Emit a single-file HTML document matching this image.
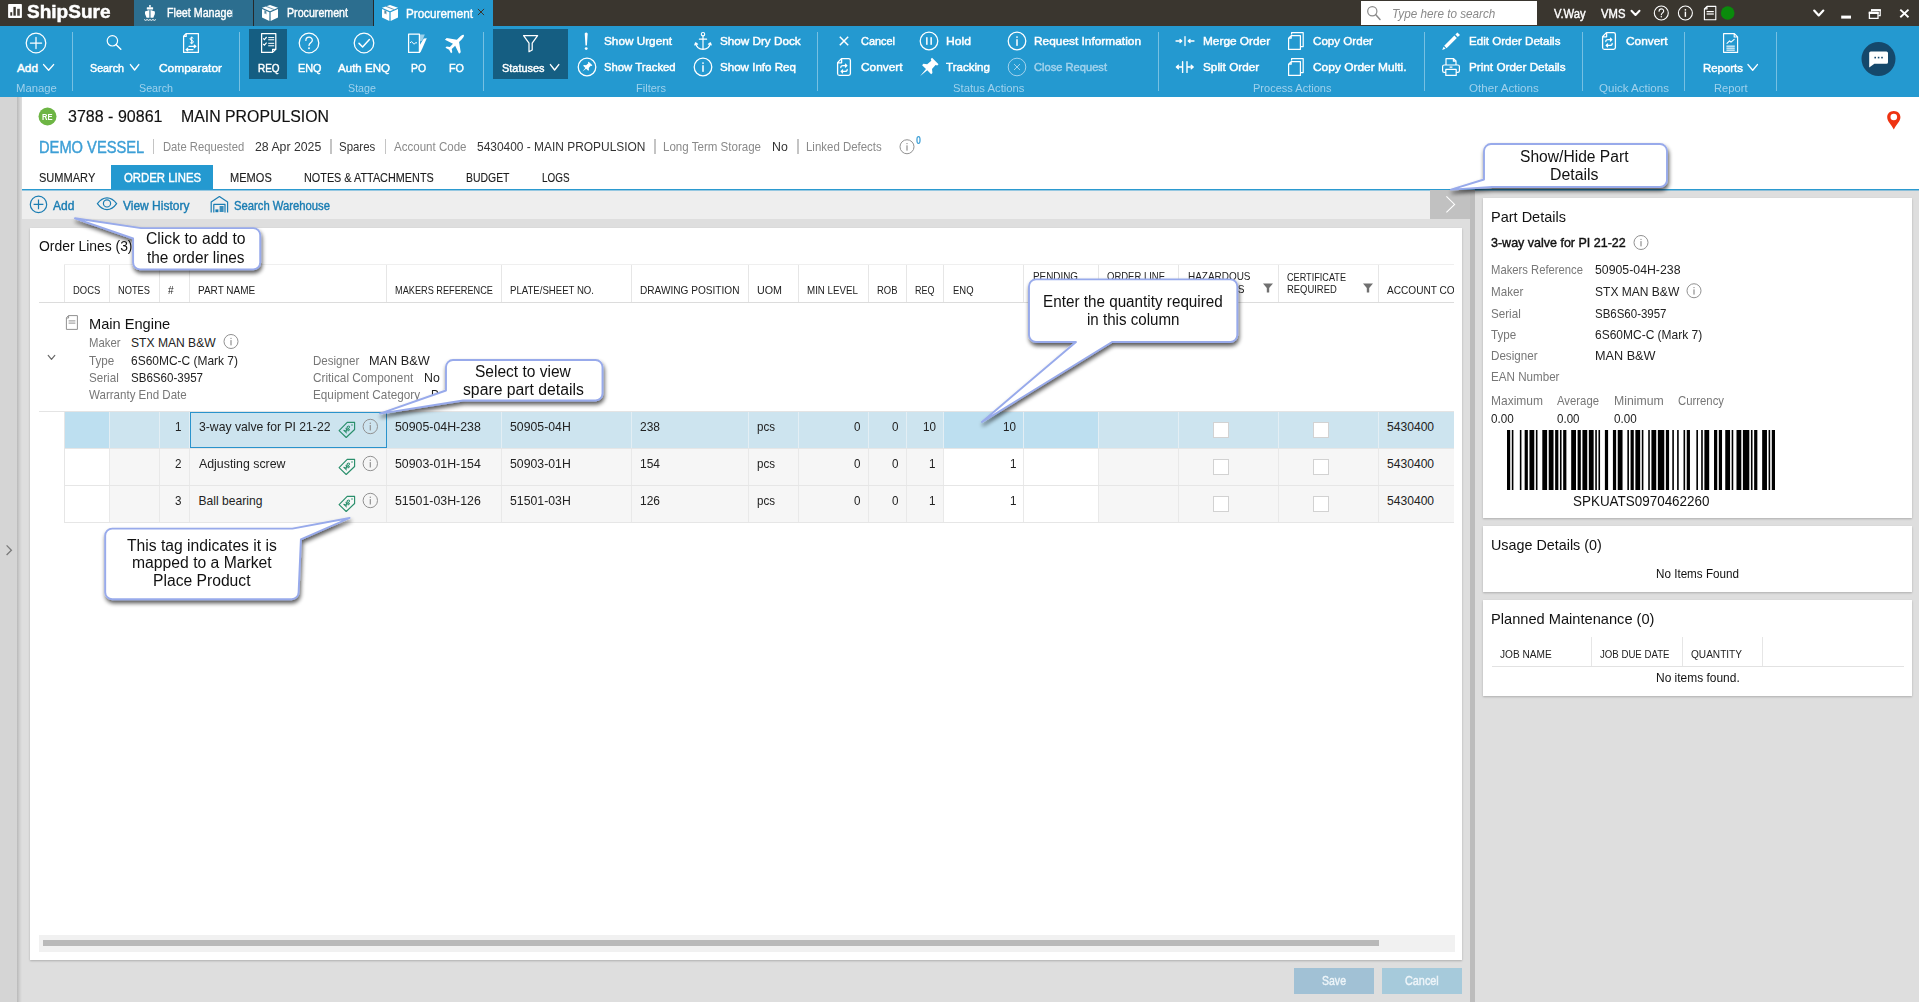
<!DOCTYPE html>
<html><head><meta charset="utf-8"><title>ShipSure - Procurement</title><style>
html,body{margin:0;padding:0}
body{width:1919px;height:1002px;overflow:hidden;position:relative;background:#dedede;font-family:"Liberation Sans", sans-serif;}
body div,body svg,body span.t{position:absolute;}
span.t{white-space:pre;line-height:1;display:block}
svg{overflow:visible}

</style></head><body>
<div style="left:0px;top:0px;width:1919px;height:26px;background:#3a362f;"></div>
<div style="left:134px;top:0px;width:119px;height:26px;background:#2c6e8f;"></div>
<div style="left:253px;top:0px;width:1px;height:26px;background:#26292b;"></div>
<div style="left:254px;top:0px;width:119px;height:26px;background:#2c6e8f;"></div>
<div style="left:373px;top:0px;width:1px;height:26px;background:#26292b;"></div>
<div style="left:374px;top:0px;width:119px;height:26px;background:#2499d0;"></div>
<div style="left:1361px;top:1px;width:176px;height:24px;background:#ffffff;"></div>
<div style="left:0px;top:26px;width:1919px;height:71px;background:#2499d0;box-shadow:0 1px 1px rgba(120,140,150,.55);"></div>
<div style="left:249px;top:29px;width:38px;height:50px;background:#155e82;"></div>
<div style="left:493px;top:29px;width:75px;height:50px;background:#155e82;"></div>
<div style="left:72px;top:32px;width:1px;height:59px;background:rgba(255,255,255,.38);"></div>
<div style="left:239px;top:32px;width:1px;height:59px;background:rgba(255,255,255,.38);"></div>
<div style="left:483px;top:32px;width:1px;height:59px;background:rgba(255,255,255,.38);"></div>
<div style="left:817px;top:32px;width:1px;height:59px;background:rgba(255,255,255,.38);"></div>
<div style="left:1158px;top:32px;width:1px;height:59px;background:rgba(255,255,255,.38);"></div>
<div style="left:1424px;top:32px;width:1px;height:59px;background:rgba(255,255,255,.38);"></div>
<div style="left:1582px;top:32px;width:1px;height:59px;background:rgba(255,255,255,.38);"></div>
<div style="left:1684px;top:32px;width:1px;height:59px;background:rgba(255,255,255,.38);"></div>
<div style="left:1776px;top:32px;width:1px;height:59px;background:rgba(255,255,255,.38);"></div>
<div style="left:0px;top:97px;width:17px;height:905px;background:#d5d5d5;"></div>
<div style="left:17px;top:97px;width:5px;height:905px;background:linear-gradient(90deg,#b9b9b9,#cfcfcf 50%,#dedede);"></div>
<div style="left:22px;top:97px;width:1897px;height:92px;background:#ffffff;"></div>
<div style="left:22px;top:189px;width:1897px;height:1px;background:#2b9ad0;"></div>
<div style="left:22px;top:190px;width:1897px;height:1px;background:rgba(43,154,208,.45);"></div>
<div style="left:22px;top:190px;width:1408px;height:29px;background:#eeeeee;"></div>
<div style="left:22px;top:190px;width:1408px;height:1px;background:rgba(43,154,208,.45);"></div>
<div style="left:1430px;top:190px;width:45px;height:29px;background:#c1c1c1;"></div>
<div style="left:1470px;top:190px;width:5px;height:812px;background:#bcbcbc;"></div>
<div style="left:30px;top:228px;width:1432px;height:732px;background:#ffffff;box-shadow:0 1px 2px rgba(0,0,0,.22);"></div>
<div style="left:1483px;top:198px;width:429px;height:320px;background:#ffffff;box-shadow:0 1px 2px rgba(0,0,0,.22);"></div>
<div style="left:1483px;top:526px;width:429px;height:66px;background:#ffffff;box-shadow:0 1px 2px rgba(0,0,0,.22);"></div>
<div style="left:1483px;top:600px;width:429px;height:96px;background:#ffffff;box-shadow:0 1px 2px rgba(0,0,0,.22);"></div>
<div style="left:1294px;top:968px;width:80px;height:26px;background:#a1c1d5;"></div>
<div style="left:1382px;top:968px;width:80px;height:26px;background:#a6cadb;"></div>
<div style="left:39px;top:935px;width:1416px;height:17px;background:#f1f1f1;"></div>
<div style="left:43px;top:940px;width:1336px;height:6px;background:#b9b9b9;"></div>
<div style="left:152.5px;top:139px;width:1.5px;height:15px;background:#c4c4c4;"></div>
<div style="left:330px;top:139px;width:1.5px;height:15px;background:#c4c4c4;"></div>
<div style="left:384.5px;top:139px;width:1.5px;height:15px;background:#c4c4c4;"></div>
<div style="left:654px;top:139px;width:1.5px;height:15px;background:#c4c4c4;"></div>
<div style="left:797px;top:139px;width:1.5px;height:15px;background:#c4c4c4;"></div>
<div style="left:111px;top:165px;width:102px;height:24px;background:#2499d0;"></div>
<div style="left:39px;top:264px;width:1415px;height:39px;overflow:hidden" id="thead"><div style="left:25px;top:0;width:1px;height:38px;background:#e6e6e6"></div><div style="left:70px;top:0;width:1px;height:38px;background:#e6e6e6"></div><div style="left:120px;top:0;width:1px;height:38px;background:#e6e6e6"></div><div style="left:150px;top:0;width:1px;height:38px;background:#e6e6e6"></div><div style="left:347px;top:0;width:1px;height:38px;background:#e6e6e6"></div><div style="left:462px;top:0;width:1px;height:38px;background:#e6e6e6"></div><div style="left:592px;top:0;width:1px;height:38px;background:#e6e6e6"></div><div style="left:709px;top:0;width:1px;height:38px;background:#e6e6e6"></div><div style="left:759px;top:0;width:1px;height:38px;background:#e6e6e6"></div><div style="left:829px;top:0;width:1px;height:38px;background:#e6e6e6"></div><div style="left:867px;top:0;width:1px;height:38px;background:#e6e6e6"></div><div style="left:904px;top:0;width:1px;height:38px;background:#e6e6e6"></div><div style="left:984px;top:0;width:1px;height:38px;background:#e6e6e6"></div><div style="left:1059px;top:0;width:1px;height:38px;background:#e6e6e6"></div><div style="left:1139px;top:0;width:1px;height:38px;background:#e6e6e6"></div><div style="left:1239px;top:0;width:1px;height:38px;background:#e6e6e6"></div><div style="left:1339px;top:0;width:1px;height:38px;background:#e6e6e6"></div><div style="left:25px;top:0;width:1390px;height:1px;background:#efefef"></div><div style="left:0;top:38px;width:1415px;height:1px;background:#dcdcdc"></div></div>
<div style="left:39px;top:411px;width:1415px;height:1px;background:#e4e4e4;"></div>
<div style="left:64px;top:412px;width:1390px;height:37px;border-bottom:1px solid #e6e6e6;box-sizing:border-box;overflow:hidden"><div style="left:0px;top:0;width:45px;height:36px;background:#bddff0;border-left:1px solid #e3eef4;box-sizing:border-box"></div><div style="left:45px;top:0;width:50px;height:36px;background:#cde4ef;border-left:1px solid #e3eef4;box-sizing:border-box"></div><div style="left:95px;top:0;width:30px;height:36px;background:#cde4ef;border-left:1px solid #e3eef4;box-sizing:border-box"></div><div style="left:125px;top:0;width:197px;height:36px;background:#cde4ef;border-left:1px solid #e3eef4;box-sizing:border-box"></div><div style="left:322px;top:0;width:115px;height:36px;background:#cde4ef;border-left:1px solid #e3eef4;box-sizing:border-box"></div><div style="left:437px;top:0;width:130px;height:36px;background:#cde4ef;border-left:1px solid #e3eef4;box-sizing:border-box"></div><div style="left:567px;top:0;width:117px;height:36px;background:#cde4ef;border-left:1px solid #e3eef4;box-sizing:border-box"></div><div style="left:684px;top:0;width:50px;height:36px;background:#cde4ef;border-left:1px solid #e3eef4;box-sizing:border-box"></div><div style="left:734px;top:0;width:70px;height:36px;background:#cde4ef;border-left:1px solid #e3eef4;box-sizing:border-box"></div><div style="left:804px;top:0;width:38px;height:36px;background:#cde4ef;border-left:1px solid #e3eef4;box-sizing:border-box"></div><div style="left:842px;top:0;width:37px;height:36px;background:#cde4ef;border-left:1px solid #e3eef4;box-sizing:border-box"></div><div style="left:879px;top:0;width:80px;height:36px;background:#bddff0;border-left:1px solid #e3eef4;box-sizing:border-box"></div><div style="left:959px;top:0;width:75px;height:36px;background:#bddff0;border-left:1px solid #e3eef4;box-sizing:border-box"></div><div style="left:1034px;top:0;width:80px;height:36px;background:#cde4ef;border-left:1px solid #e3eef4;box-sizing:border-box"></div><div style="left:1114px;top:0;width:100px;height:36px;background:#cde4ef;border-left:1px solid #e3eef4;box-sizing:border-box"></div><div style="left:1214px;top:0;width:100px;height:36px;background:#cde4ef;border-left:1px solid #e3eef4;box-sizing:border-box"></div><div style="left:1314px;top:0;width:76px;height:36px;background:#cde4ef;border-left:1px solid #e3eef4;box-sizing:border-box"></div></div>
<div style="left:1213px;top:422px;width:16px;height:16px;background:#fff;border:1px solid #d2d2d2;box-sizing:border-box"></div>
<div style="left:1313px;top:422px;width:16px;height:16px;background:#fff;border:1px solid #d2d2d2;box-sizing:border-box"></div>
<div style="left:64px;top:449px;width:1390px;height:37px;border-bottom:1px solid #e6e6e6;box-sizing:border-box;overflow:hidden"><div style="left:0px;top:0;width:45px;height:36px;background:#ffffff;border-left:1px solid #e9e9e9;box-sizing:border-box"></div><div style="left:45px;top:0;width:50px;height:36px;background:#f6f6f6;border-left:1px solid #e9e9e9;box-sizing:border-box"></div><div style="left:95px;top:0;width:30px;height:36px;background:#f6f6f6;border-left:1px solid #e9e9e9;box-sizing:border-box"></div><div style="left:125px;top:0;width:197px;height:36px;background:#f6f6f6;border-left:1px solid #e9e9e9;box-sizing:border-box"></div><div style="left:322px;top:0;width:115px;height:36px;background:#f6f6f6;border-left:1px solid #e9e9e9;box-sizing:border-box"></div><div style="left:437px;top:0;width:130px;height:36px;background:#f6f6f6;border-left:1px solid #e9e9e9;box-sizing:border-box"></div><div style="left:567px;top:0;width:117px;height:36px;background:#f6f6f6;border-left:1px solid #e9e9e9;box-sizing:border-box"></div><div style="left:684px;top:0;width:50px;height:36px;background:#f6f6f6;border-left:1px solid #e9e9e9;box-sizing:border-box"></div><div style="left:734px;top:0;width:70px;height:36px;background:#f6f6f6;border-left:1px solid #e9e9e9;box-sizing:border-box"></div><div style="left:804px;top:0;width:38px;height:36px;background:#f6f6f6;border-left:1px solid #e9e9e9;box-sizing:border-box"></div><div style="left:842px;top:0;width:37px;height:36px;background:#f6f6f6;border-left:1px solid #e9e9e9;box-sizing:border-box"></div><div style="left:879px;top:0;width:80px;height:36px;background:#ffffff;border-left:1px solid #e9e9e9;box-sizing:border-box"></div><div style="left:959px;top:0;width:75px;height:36px;background:#ffffff;border-left:1px solid #e9e9e9;box-sizing:border-box"></div><div style="left:1034px;top:0;width:80px;height:36px;background:#f6f6f6;border-left:1px solid #e9e9e9;box-sizing:border-box"></div><div style="left:1114px;top:0;width:100px;height:36px;background:#f6f6f6;border-left:1px solid #e9e9e9;box-sizing:border-box"></div><div style="left:1214px;top:0;width:100px;height:36px;background:#f6f6f6;border-left:1px solid #e9e9e9;box-sizing:border-box"></div><div style="left:1314px;top:0;width:76px;height:36px;background:#f6f6f6;border-left:1px solid #e9e9e9;box-sizing:border-box"></div></div>
<div style="left:1213px;top:459px;width:16px;height:16px;background:#fff;border:1px solid #d2d2d2;box-sizing:border-box"></div>
<div style="left:1313px;top:459px;width:16px;height:16px;background:#fff;border:1px solid #d2d2d2;box-sizing:border-box"></div>
<div style="left:64px;top:486px;width:1390px;height:37px;border-bottom:1px solid #e6e6e6;box-sizing:border-box;overflow:hidden"><div style="left:0px;top:0;width:45px;height:36px;background:#ffffff;border-left:1px solid #e9e9e9;box-sizing:border-box"></div><div style="left:45px;top:0;width:50px;height:36px;background:#f6f6f6;border-left:1px solid #e9e9e9;box-sizing:border-box"></div><div style="left:95px;top:0;width:30px;height:36px;background:#f6f6f6;border-left:1px solid #e9e9e9;box-sizing:border-box"></div><div style="left:125px;top:0;width:197px;height:36px;background:#f6f6f6;border-left:1px solid #e9e9e9;box-sizing:border-box"></div><div style="left:322px;top:0;width:115px;height:36px;background:#f6f6f6;border-left:1px solid #e9e9e9;box-sizing:border-box"></div><div style="left:437px;top:0;width:130px;height:36px;background:#f6f6f6;border-left:1px solid #e9e9e9;box-sizing:border-box"></div><div style="left:567px;top:0;width:117px;height:36px;background:#f6f6f6;border-left:1px solid #e9e9e9;box-sizing:border-box"></div><div style="left:684px;top:0;width:50px;height:36px;background:#f6f6f6;border-left:1px solid #e9e9e9;box-sizing:border-box"></div><div style="left:734px;top:0;width:70px;height:36px;background:#f6f6f6;border-left:1px solid #e9e9e9;box-sizing:border-box"></div><div style="left:804px;top:0;width:38px;height:36px;background:#f6f6f6;border-left:1px solid #e9e9e9;box-sizing:border-box"></div><div style="left:842px;top:0;width:37px;height:36px;background:#f6f6f6;border-left:1px solid #e9e9e9;box-sizing:border-box"></div><div style="left:879px;top:0;width:80px;height:36px;background:#ffffff;border-left:1px solid #e9e9e9;box-sizing:border-box"></div><div style="left:959px;top:0;width:75px;height:36px;background:#ffffff;border-left:1px solid #e9e9e9;box-sizing:border-box"></div><div style="left:1034px;top:0;width:80px;height:36px;background:#f6f6f6;border-left:1px solid #e9e9e9;box-sizing:border-box"></div><div style="left:1114px;top:0;width:100px;height:36px;background:#f6f6f6;border-left:1px solid #e9e9e9;box-sizing:border-box"></div><div style="left:1214px;top:0;width:100px;height:36px;background:#f6f6f6;border-left:1px solid #e9e9e9;box-sizing:border-box"></div><div style="left:1314px;top:0;width:76px;height:36px;background:#f6f6f6;border-left:1px solid #e9e9e9;box-sizing:border-box"></div></div>
<div style="left:1213px;top:496px;width:16px;height:16px;background:#fff;border:1px solid #d2d2d2;box-sizing:border-box"></div>
<div style="left:1313px;top:496px;width:16px;height:16px;background:#fff;border:1px solid #d2d2d2;box-sizing:border-box"></div>
<div style="left:64px;top:412px;width:1px;height:111px;background:#e6e6e6;"></div>
<div style="left:190px;top:412px;width:197px;height:36px;border:1px solid #2a93cc;box-sizing:border-box"></div>
<div style="left:1591px;top:637px;width:1px;height:30px;background:#e6e6e6;"></div>
<div style="left:1682px;top:637px;width:1px;height:30px;background:#e6e6e6;"></div>
<div style="left:1762px;top:637px;width:1px;height:30px;background:#e6e6e6;"></div>
<div style="left:1492px;top:666px;width:412px;height:1px;background:#e2e2e2;"></div>
<svg style="left:0;top:0" width="1919" height="1002" viewBox="0 0 1919 1002"><rect x="8.1" y="4" width="13.8" height="14.1" rx=".8" fill="#fff"/><rect x="10.3" y="12.2" width="1.9" height="3.5" fill="#3a362f"/><rect x="13.4" y="6.9" width="2.4" height="8.8" fill="#3a362f"/><rect x="17.2" y="8.8" width="2.6" height="6.9" fill="#4e4a43"/><g fill="#fff"><rect x="149.2" y="5" width="1.5" height="2.3"/><rect x="146.8" y="7.2" width="6.3" height="2.4" rx=".5"/><path d="M149.4,10 L149.4,17.8 L146.6,17.8 Q144.3,14 145,11.6 Z"/><path d="M150.5,10 L150.5,17.8 L153.3,17.8 Q155.6,14 154.9,11.6 Z"/></g><path d="M144.2,19.6 q1.45,1.5 2.9,0 q1.45,1.5 2.9,0 q1.45,1.5 2.9,0 q1.45,1.5 2.9,0" fill="none" stroke="#fff" stroke-width="1"/><g transform="translate(262,0)" fill="#fff"><path d="M8,5 L16,7.8 L8,11.2 L0,7.8 Z"/><path d="M0,9 L7.4,12.3 L7.4,21 L0,17.6 Z"/><path d="M8.6,12.3 L16,9 L16,17.6 L8.6,21 Z"/><path d="M3.2,6.6 L11.3,9.7 L12.6,9.2 L4.5,6.1 Z" fill="#2c6e8f" opacity=".7"/><path d="M2.4,10.2 L4.4,11.1 L4.4,14.6 L3.4,13.4 L2.4,13.8 Z" fill="#2c6e8f" opacity=".8"/></g><g transform="translate(382,0)" fill="#fff"><path d="M8,5 L16,7.8 L8,11.2 L0,7.8 Z"/><path d="M0,9 L7.4,12.3 L7.4,21 L0,17.6 Z"/><path d="M8.6,12.3 L16,9 L16,17.6 L8.6,21 Z"/><path d="M3.2,6.6 L11.3,9.7 L12.6,9.2 L4.5,6.1 Z" fill="#2c6e8f" opacity=".7"/><path d="M2.4,10.2 L4.4,11.1 L4.4,14.6 L3.4,13.4 L2.4,13.8 Z" fill="#2c6e8f" opacity=".8"/></g><path d="M477.9,8.9 L484.1,15.1 M484.1,8.9 L477.9,15.1" fill="none" stroke="#3a362f" stroke-width="1"/><circle cx="1372.3" cy="11.2" r="4.6" fill="none" stroke="#8a8a8a" stroke-width="1.2"/><path d="M1375.6,14.6 L1380,19.4" fill="none" stroke="#8a8a8a" stroke-width="1.5" stroke-linecap="round"/><path d="M1631.5,10.8 L1635.5,15 L1639.5,10.8" fill="none" stroke="#fff" stroke-width="2" stroke-linecap="round" stroke-linejoin="round"/><circle cx="1661.3" cy="13" r="7" fill="none" stroke="#fff" stroke-width="1.1"/><path d="M1659.06,11.18 C1659.06,8.100000000000001 1663.68,8.100000000000001 1663.68,11.040000000000001 C1663.68,12.86 1661.3,12.86 1661.3,14.82" fill="none" stroke="#fff" stroke-width="1.1" stroke-linecap="round"/><circle cx="1661.3" cy="16.78" r="0.76" fill="#fff"/><circle cx="1685.4" cy="13" r="7" fill="none" stroke="#fff" stroke-width="1.1"/><circle cx="1685.4" cy="9.85" r="0.84" fill="#fff"/><rect x="1684.7" y="11.6" width="1.4" height="5.25" fill="#fff"/><path d="M1707,6.4 L1715.8,6.4 L1715.8,19.8 L1704.4,19.8 L1704.4,9 Z M1704.4,9 L1707,9 L1707,6.4" fill="none" stroke="#fff" stroke-width="1.1" stroke-linejoin="round"/><rect x="1706.6" y="11" width="7.2" height="1.2" fill="#fff"/><rect x="1706.6" y="13.4" width="7.2" height="1.2" fill="#fff"/><circle cx="1727.7" cy="13" r="6.8" fill="#0a8a0c"/><path d="M1814.2,10.6 L1818.75,15.4 L1823.3,10.6" fill="none" stroke="#fff" stroke-width="2.2" stroke-linecap="round" stroke-linejoin="round"/><rect x="1841.2" y="15.6" width="9.8" height="3" fill="#fff"/><path d="M1869.4,12.4 L1878,12.4 L1878,18.4 L1869.4,18.4 Z" fill="none" stroke="#fff" stroke-width="1.3"/><rect x="1868.8" y="11.8" width="9.8" height="2.2" fill="#fff"/><path d="M1871.6,11.6 L1871.6,9.9 L1880.2,9.9 L1880.2,15.6 L1878.4,15.6" fill="none" stroke="#fff" stroke-width="1.2"/><rect x="1871" y="9.3" width="9.8" height="1.8" fill="#fff"/><path d="M1900.3,9.6 L1908.5,17.2 M1908.5,9.6 L1900.3,17.2" fill="none" stroke="#fff" stroke-width="1.9"/><circle cx="36" cy="43" r="9.8" fill="none" stroke="#fff" stroke-width="1.25" stroke-linecap="round" stroke-linejoin="round"/><path d="M30.4,43 L41.6,43 M36,37.4 L36,48.6" fill="none" stroke="#fff" stroke-width="1.25" stroke-linecap="round" stroke-linejoin="round"/><path d="M43.6,64.6 L48.6,70.2 L53.6,64.6" fill="none" stroke="#fff" stroke-width="1.4" stroke-linecap="round" stroke-linejoin="round"/><path d="M130.4,64.6 L134.60000000000002,70 L138.8,64.6" fill="none" stroke="#fff" stroke-width="1.4" stroke-linecap="round" stroke-linejoin="round"/><path d="M550.4,64.6 L554.5999999999999,70 L558.8,64.6" fill="none" stroke="#fff" stroke-width="1.4" stroke-linecap="round" stroke-linejoin="round"/><path d="M1748,64.6 L1752.7,70.2 L1757.4,64.6" fill="none" stroke="#fff" stroke-width="1.4" stroke-linecap="round" stroke-linejoin="round"/><circle cx="112.4" cy="40.8" r="5.2" fill="none" stroke="#fff" stroke-width="1.2"/><path d="M116.2,44.8 L120.8,49.2" fill="none" stroke="#fff" stroke-width="1.5" stroke-linecap="round"/><path d="M186,33.6 L198.4,33.6 L198.4,52.4 L183.6,52.4 L183.6,36.2 Z M183.6,36.4 L186.2,36.4 L186.2,33.8" fill="none" stroke="#fff" stroke-width="1.25" stroke-linecap="round" stroke-linejoin="round"/><path d="M193.3,38.3 C192.6,37.3 190,37.3 190,38.9 C190,40.6 193.4,40 193.4,41.9 C193.4,43.4 190.6,43.5 189.9,42.4 M191.7,36.6 L191.7,44.2" fill="none" stroke="#fff" stroke-width="1"/><path d="M189,46.4 L195.6,46.4 M194.2,45 L196,46.4 L194.2,47.8 M193,49.6 L186.4,49.6 M187.8,48.2 L186,49.6 L187.8,51" fill="none" stroke="#fff" stroke-width="1.1" stroke-linecap="round" stroke-linejoin="round"/><path d="M261.6,33.6 L275.8,33.6 L275.8,49.4 L272.6,52.4 L261.6,52.4 Z M275.6,49.4 L272.6,49.4 L272.6,52.2" fill="none" stroke="#fff" stroke-width="1.25" stroke-linecap="round" stroke-linejoin="round"/><path d="M263.2,38.4 L264.4,39.6 L266.6,37 M263.2,44 L264.4,45.2 L266.6,42.6" fill="none" stroke="#fff" stroke-width="1.2"/><g fill="#fff" opacity=".92"><rect x="268.2" y="37" width="6" height="1.1"/><rect x="268.2" y="39.2" width="6" height="1.1"/><rect x="268.2" y="42.8" width="6" height="1.1"/><rect x="268.2" y="45.2" width="6" height="1.1"/></g><circle cx="309" cy="43" r="9.8" fill="none" stroke="#fff" stroke-width="1.25"/><path d="M305.864,40.452 C305.864,36.14 312.332,36.14 312.332,40.256 C312.332,42.804 309,42.804 309,45.548" fill="none" stroke="#fff" stroke-width="1.25" stroke-linecap="round"/><circle cx="309" cy="48.292" r="0.931" fill="#fff"/><circle cx="364" cy="43" r="9.8" fill="none" stroke="#fff" stroke-width="1.25" stroke-linecap="round" stroke-linejoin="round"/><path d="M359,43.4 L362.6,47 L369.4,39.6" fill="none" stroke="#fff" stroke-width="1.5" stroke-linecap="round" stroke-linejoin="round"/><path d="M408.6,34 L419.4,34 L419.4,52.4 L408.6,52.4 Z" fill="none" stroke="#fff" stroke-width="1.25" stroke-linecap="round" stroke-linejoin="round"/><path d="M410.2,43 C411,41.2 412.2,41.4 412.8,42.8 C413.4,44.4 414.8,44.4 415.4,42.8 L417,42.8" fill="none" stroke="#fff" stroke-width="1"/><path d="M420,34.6 L424.8,34.6 L422.4,40.6 L420,41.4 Z" fill="#fff" opacity=".55"/><path d="M423.8,38.6 L426.8,38.2 L420.6,52.2 L419.8,52.2 L419.8,45 Z" fill="#fff"/><path transform="translate(455.9,42.9) rotate(45) scale(.86)" fill="#fff" d="M0,-13 C1.3,-13 1.8,-10 1.8,-8 L1.8,-3.4 L11.6,3.6 L11.6,6.4 L1.8,3 L1.6,8.4 L4.6,10.6 L4.6,12.6 L0,11.2 L-4.6,12.6 L-4.6,10.6 L-1.6,8.4 L-1.8,3 L-11.6,6.4 L-11.6,3.6 L-1.8,-3.4 L-1.8,-8 C-1.8,-10 -1.3,-13 0,-13 Z"/><path d="M523.6,35.6 L537.6,35.6 L532.2,43.2 L532.2,50 L529,51.8 L529,43.2 Z" fill="none" stroke="#fff" stroke-width="1.25" stroke-linecap="round" stroke-linejoin="round"/><path d="M584.7,33.4 Q586.2,31.6 587.7,33.4 L586.9,45.6 L585.5,45.6 Z" fill="#fff"/><circle cx="586.2" cy="48.6" r="1.45" fill="#fff"/><circle cx="587" cy="67" r="8.8" fill="none" stroke="#fff" stroke-width="1.25" stroke-linecap="round" stroke-linejoin="round"/><path transform="translate(587,67) rotate(45)" fill="#fff" d="M-2.6,-5 L2.6,-5 L2.6,-4 L1.7,-3.6 L1.9,-0.6 L3.6,0.8 L3.6,1.8 L0.5,1.8 L0,6.4 L-0.5,1.8 L-3.6,1.8 L-3.6,0.8 L-1.9,-0.6 L-1.7,-3.6 L-2.6,-4 Z"/><circle cx="703" cy="34.2" r="1.7" fill="none" stroke="#fff" stroke-width="1.1"/><path d="M703,36 L703,49.4 M699.4,39.2 L706.6,39.2 M695.6,43.2 C696.4,47.6 699.4,49.4 703,49.4 C706.6,49.4 709.6,47.6 710.4,43.2 M694.8,45 L695.6,42.8 L697.6,44.2 M711.2,45 L710.4,42.8 L708.4,44.2" fill="none" stroke="#fff" stroke-width="1.2" stroke-linecap="round" stroke-linejoin="round"/><circle cx="703" cy="67" r="8.8" fill="none" stroke="#fff" stroke-width="1.25"/><circle cx="703" cy="63.04" r="0.8999999999999999" fill="#fff"/><rect x="702.25" y="65.24" width="1.5" height="6.6000000000000005" fill="#fff"/><path d="M839.8,36.8 L848.2,45.2 M848.2,36.8 L839.8,45.2" fill="none" stroke="#fff" stroke-width="1.5"/><g transform="translate(837,58)"><path d="M4.4,0.6 L11.6,0.6 Q13.4,0.6 13.4,2.4 L13.4,15.6 Q13.4,17.4 11.6,17.4 L2.4,17.4 Q0.6,17.4 0.6,15.6 L0.6,4.6 Z M0.8,4.8 L4.6,4.8 L4.6,1" fill="none" stroke="#fff" stroke-width="1.3" stroke-linejoin="round"/><path d="M3.8,9.6 C3.8,8.2 4.8,7.6 6,7.6 L9.6,7.6 M8.4,6.2 L9.9,7.6 L8.4,9 M10.2,11.4 C10.2,12.8 9.2,13.4 8,13.4 L4.4,13.4 M5.6,12 L4.1,13.4 L5.6,14.8" fill="none" stroke="#fff" stroke-width="1.2" stroke-linecap="round" stroke-linejoin="round"/></g><g transform="translate(1602,32)"><path d="M4.4,0.6 L11.6,0.6 Q13.4,0.6 13.4,2.4 L13.4,15.6 Q13.4,17.4 11.6,17.4 L2.4,17.4 Q0.6,17.4 0.6,15.6 L0.6,4.6 Z M0.8,4.8 L4.6,4.8 L4.6,1" fill="none" stroke="#fff" stroke-width="1.3" stroke-linejoin="round"/><path d="M3.8,9.6 C3.8,8.2 4.8,7.6 6,7.6 L9.6,7.6 M8.4,6.2 L9.9,7.6 L8.4,9 M10.2,11.4 C10.2,12.8 9.2,13.4 8,13.4 L4.4,13.4 M5.6,12 L4.1,13.4 L5.6,14.8" fill="none" stroke="#fff" stroke-width="1.2" stroke-linecap="round" stroke-linejoin="round"/></g><circle cx="929" cy="41" r="8.8" fill="none" stroke="#fff" stroke-width="1.25" stroke-linecap="round" stroke-linejoin="round"/><rect x="926.1" y="37.2" width="1.5" height="7.6" fill="#fff"/><rect x="930.4" y="37.2" width="1.5" height="7.6" fill="#fff"/><path transform="translate(928.9,67.4) rotate(45)" fill="#fff" d="M-4.6,-9 L4.6,-9 L4.6,-7.2 L3,-6.4 L3.4,-1 L6.4,1.4 L6.4,3.2 L0.9,3.2 L0,12.6 L-0.9,3.2 L-6.4,3.2 L-6.4,1.4 L-3.4,-1 L-3,-6.4 L-4.6,-7.2 Z"/><circle cx="1017" cy="41" r="8.8" fill="none" stroke="#fff" stroke-width="1.25"/><circle cx="1017" cy="37.04" r="0.8999999999999999" fill="#fff"/><rect x="1016.25" y="39.24" width="1.5" height="6.6000000000000005" fill="#fff"/><circle cx="1017" cy="67" r="8.8" fill="none" stroke="#a2d2ec" stroke-width="1"/><path d="M1014,64 L1020,70 M1020,64 L1014,70" fill="none" stroke="#a2d2ec" stroke-width="1"/><path d="M1176,41 L1181.6,41 M1180,39.4 L1181.8,41 L1180,42.6 M1185,36.6 L1185,45.6 M1194,41 L1188.4,41 M1190,39.4 L1188.2,41 L1190,42.6" fill="none" stroke="#fff" stroke-width="1.3" stroke-linecap="round" stroke-linejoin="round"/><path d="M1182.6,61.8 L1182.6,72.4 M1187,61.8 L1187,72.4 M1182.4,67 L1176.6,67 M1178.4,65.2 L1176.4,67 L1178.4,68.8 M1187.2,67 L1193,67 M1191.2,65.2 L1193.2,67 L1191.2,68.8" fill="none" stroke="#fff" stroke-width="1.4" stroke-linecap="round" stroke-linejoin="round"/><g transform="translate(1288,32)"><path d="M3.6,2.4 L3.6,0.6 L15.2,0.6 L15.2,14.6 L12.8,14.6" fill="none" stroke="#fff" stroke-width="1.2" stroke-linejoin="round"/><path d="M3.2,3.6 L12.4,3.6 L12.4,17.4 L0.6,17.4 L0.6,6.2 Z M0.8,6.2 L3.2,6.2 L3.2,3.8" fill="none" stroke="#fff" stroke-width="1.2" stroke-linejoin="round"/></g><g transform="translate(1288,58)"><path d="M3.6,2.4 L3.6,0.6 L15.2,0.6 L15.2,14.6 L12.8,14.6" fill="none" stroke="#fff" stroke-width="1.2" stroke-linejoin="round"/><path d="M3.2,3.6 L12.4,3.6 L12.4,17.4 L0.6,17.4 L0.6,6.2 Z M0.8,6.2 L3.2,6.2 L3.2,3.8" fill="none" stroke="#fff" stroke-width="1.2" stroke-linejoin="round"/></g><path d="M1455.4,34.6 L1457.4,32.4 L1460,35 L1457.8,37 Z" fill="#fff"/><path d="M1454.4,35.6 L1456.8,38 L1446.6,48.2 L1444.2,45.8 Z" fill="#fff"/><path d="M1443.6,46.8 L1445.6,48.8 L1442.2,50 Z" fill="#fff"/><path d="M1446,65 L1446,58.6 L1453.6,58.6 L1456,61 L1456,65 M1453.4,58.8 L1453.4,61.2 L1455.8,61.2" fill="none" stroke="#fff" stroke-width="1.2" stroke-linejoin="round"/><path d="M1445.8,72.4 L1444.2,72.4 Q1442.6,72.4 1442.6,70.8 L1442.6,66.6 Q1442.6,65 1444.2,65 L1457.8,65 Q1459.4,65 1459.4,66.6 L1459.4,70.8 Q1459.4,72.4 1457.8,72.4 L1456.2,72.4" fill="none" stroke="#fff" stroke-width="1.2"/><path d="M1445.8,69.4 L1456.2,69.4 L1456.2,75.4 L1445.8,75.4 Z M1449.6,67.2 L1452.4,67.2" fill="none" stroke="#fff" stroke-width="1.2" stroke-linejoin="round"/><path d="M1723.6,33.6 L1734.4,33.6 L1737.6,36.8 L1737.6,52.4 L1723.6,52.4 Z M1734.2,33.8 L1734.2,37 L1737.4,37" fill="none" stroke="#fff" stroke-width="1.15" stroke-linejoin="round"/><path d="M1727,43.4 L1729.6,40.8 L1731,42.2 L1734.2,39.4" fill="none" stroke="#fff" stroke-width="1.1" stroke-linejoin="round" stroke-linecap="round"/><g fill="#fff"><rect x="1726.4" y="45.6" width="8.4" height="1.1"/><rect x="1726.4" y="47.6" width="8.4" height="1.1"/><rect x="1726.4" y="49.6" width="8.4" height="1.1"/></g><circle cx="1878.5" cy="59" r="17" fill="#15486b"/><path d="M1870.8,51.4 L1886.4,51.4 Q1888,51.4 1888,53 L1888,62.2 Q1888,63.8 1886.4,63.8 L1874.4,63.8 L1869.2,67.6 L1869.2,53 Q1869.2,51.4 1870.8,51.4 Z" fill="#fff"/><g fill="#15486b"><rect x="1874.4" y="56.8" width="1.6" height="1.6"/><rect x="1877.8" y="56.8" width="1.6" height="1.6"/><rect x="1881.2" y="56.8" width="1.6" height="1.6"/></g><circle cx="47.5" cy="116.5" r="9" fill="#6db544"/><circle cx="907" cy="146.75" r="7" fill="none" stroke="#919191" stroke-width="1"/><circle cx="907" cy="143.6" r="0.72" fill="#919191"/><rect x="906.4" y="145.35" width="1.2" height="5.25" fill="#919191"/><path d="M1893.8,111 C1889.8,111 1887.2,113.8 1887.2,117.2 C1887.2,121.4 1891.4,124.6 1893.8,129.4 C1896.2,124.6 1900.4,121.4 1900.4,117.2 C1900.4,113.8 1897.8,111 1893.8,111 Z" fill="#ee3311"/><circle cx="1893.8" cy="117" r="3.3" fill="#fff"/><circle cx="38.5" cy="204.4" r="8.2" fill="none" stroke="#1a7db3" stroke-width="1.2"/><path d="M33.6,204.4 L43.4,204.4 M38.5,199.5 L38.5,209.3" fill="none" stroke="#1a7db3" stroke-width="1.2"/><path d="M97.4,203.6 C101,198.6 105,197.8 107,197.8 C109,197.8 113,198.6 116.6,203.6 C113,208.6 109,209.6 107,209.6 C105,209.6 101,208.6 97.4,203.6 Z" fill="none" stroke="#1a7db3" stroke-width="1.2"/><circle cx="107" cy="203.4" r="3.6" fill="none" stroke="#1a7db3" stroke-width="1.2"/><path d="M211.2,212.4 L211.2,202 L219.4,196.6 L227.6,202 L227.6,212.4 M213.8,212.4 L213.8,204.4 L225,204.4 L225,212.4" fill="none" stroke="#1a7db3" stroke-width="1.2" stroke-linejoin="round"/><g fill="#1a7db3"><rect x="219.6" y="206" width="4" height="6" opacity=".85"/><rect x="215.4" y="209.4" width="3" height="2.8"/></g><path d="M1446.4,196.4 L1454.6,204.4 L1446.4,212.4" fill="none" stroke="#fff" stroke-width="1.1"/><path d="M6.6,545.4 L11.4,550.2 L6.6,555" fill="none" stroke="#7a7a7a" stroke-width="1.3"/><path d="M68.4,315.6 L77.4,315.6 L77.4,329.4 L66.4,329.4 L66.4,317.8 Z M66.6,318 L68.6,318 L68.6,315.8" fill="none" stroke="#919191" stroke-width="1" stroke-linejoin="round"/><rect x="68.6" y="320.4" width="6.8" height="1" fill="#919191"/><rect x="68.6" y="322.6" width="6.8" height="1" fill="#919191"/><path d="M48.2,355.4 L51.5,359.4 L54.8,355.4" fill="none" stroke="#6a6a6a" stroke-width="1.2" stroke-linecap="round" stroke-linejoin="round"/><circle cx="231" cy="341.5" r="7" fill="none" stroke="#919191" stroke-width="1"/><circle cx="231" cy="338.35" r="0.72" fill="#919191"/><rect x="230.4" y="340.1" width="1.2" height="5.25" fill="#919191"/><circle cx="370.3" cy="426.5" r="7.2" fill="none" stroke="#919191" stroke-width="1"/><circle cx="370.3" cy="423.26" r="0.72" fill="#919191"/><rect x="369.7" y="425.06" width="1.2" height="5.4" fill="#919191"/><g transform="translate(0,0)"><path d="M347.2,422.4 L354.6,422.4 L354.6,429.5 L346.2,437.5 L339.1,430.6 Z" fill="none" stroke="#2a8f6c" stroke-width="1.15" stroke-linejoin="round"/><circle cx="352" cy="425" r=".75" fill="#2a8f6c"/><g transform="translate(347.5,429.3) rotate(-45)" fill="none" stroke="#2a8f6c" stroke-width=".95" stroke-linejoin="round" stroke-linecap="round"><path d="M-3.3,1.9 L-3.3,-1.9 L-1.8,0.9 L-0.3,-1.9 L-0.3,1.9 M1,1.9 L1,-1.9 L2.3,-1.9 Q3.4,-1.9 3.4,-0.9 Q3.4,0.1 2.3,0.1 L1,0.1"/></g></g><circle cx="370.3" cy="463.5" r="7.2" fill="none" stroke="#919191" stroke-width="1"/><circle cx="370.3" cy="460.26" r="0.72" fill="#919191"/><rect x="369.7" y="462.06" width="1.2" height="5.4" fill="#919191"/><g transform="translate(0,37)"><path d="M347.2,422.4 L354.6,422.4 L354.6,429.5 L346.2,437.5 L339.1,430.6 Z" fill="none" stroke="#2a8f6c" stroke-width="1.15" stroke-linejoin="round"/><circle cx="352" cy="425" r=".75" fill="#2a8f6c"/><g transform="translate(347.5,429.3) rotate(-45)" fill="none" stroke="#2a8f6c" stroke-width=".95" stroke-linejoin="round" stroke-linecap="round"><path d="M-3.3,1.9 L-3.3,-1.9 L-1.8,0.9 L-0.3,-1.9 L-0.3,1.9 M1,1.9 L1,-1.9 L2.3,-1.9 Q3.4,-1.9 3.4,-0.9 Q3.4,0.1 2.3,0.1 L1,0.1"/></g></g><circle cx="370.3" cy="500.5" r="7.2" fill="none" stroke="#919191" stroke-width="1"/><circle cx="370.3" cy="497.26" r="0.72" fill="#919191"/><rect x="369.7" y="499.06" width="1.2" height="5.4" fill="#919191"/><g transform="translate(0,74)"><path d="M347.2,422.4 L354.6,422.4 L354.6,429.5 L346.2,437.5 L339.1,430.6 Z" fill="none" stroke="#2a8f6c" stroke-width="1.15" stroke-linejoin="round"/><circle cx="352" cy="425" r=".75" fill="#2a8f6c"/><g transform="translate(347.5,429.3) rotate(-45)" fill="none" stroke="#2a8f6c" stroke-width=".95" stroke-linejoin="round" stroke-linecap="round"><path d="M-3.3,1.9 L-3.3,-1.9 L-1.8,0.9 L-0.3,-1.9 L-0.3,1.9 M1,1.9 L1,-1.9 L2.3,-1.9 Q3.4,-1.9 3.4,-0.9 Q3.4,0.1 2.3,0.1 L1,0.1"/></g></g><circle cx="1641" cy="242.5" r="7" fill="none" stroke="#919191" stroke-width="1"/><circle cx="1641" cy="239.35" r="0.72" fill="#919191"/><rect x="1640.4" y="241.1" width="1.2" height="5.25" fill="#919191"/><circle cx="1694" cy="290.75" r="7" fill="none" stroke="#919191" stroke-width="1"/><circle cx="1694" cy="287.6" r="0.72" fill="#919191"/><rect x="1693.4" y="289.35" width="1.2" height="5.25" fill="#919191"/><path d="M1263,283.4 L1273,283.4 L1269.2,288 L1269.2,292.6 L1266.8,292.6 L1266.8,288 Z" fill="#707070"/><path d="M1363,283.4 L1373,283.4 L1369.2,288 L1369.2,292.6 L1366.8,292.6 L1366.8,288 Z" fill="#707070"/><path d="M1507.00,430h3.21v60h-3.21zM1511.81,430h1.60v60h-1.60zM1519.84,430h1.60v60h-1.60zM1524.65,430h3.21v60h-3.21zM1529.47,430h4.81v60h-4.81zM1535.89,430h1.60v60h-1.60zM1542.31,430h4.81v60h-4.81zM1548.72,430h4.81v60h-4.81zM1555.14,430h3.21v60h-3.21zM1559.96,430h1.60v60h-1.60zM1563.17,430h3.21v60h-3.21zM1571.19,430h4.81v60h-4.81zM1577.61,430h3.21v60h-3.21zM1582.43,430h4.81v60h-4.81zM1588.84,430h4.81v60h-4.81zM1595.26,430h1.60v60h-1.60zM1598.47,430h1.60v60h-1.60zM1604.89,430h3.21v60h-3.21zM1612.92,430h3.21v60h-3.21zM1617.73,430h4.81v60h-4.81zM1627.36,430h1.60v60h-1.60zM1630.57,430h3.21v60h-3.21zM1635.38,430h4.81v60h-4.81zM1641.80,430h1.60v60h-1.60zM1648.22,430h1.60v60h-1.60zM1651.43,430h4.81v60h-4.81zM1657.85,430h6.42v60h-6.42zM1665.87,430h3.21v60h-3.21zM1672.29,430h1.60v60h-1.60zM1677.11,430h1.60v60h-1.60zM1683.53,430h1.60v60h-1.60zM1686.74,430h3.21v60h-3.21zM1696.37,430h1.60v60h-1.60zM1701.18,430h1.60v60h-1.60zM1704.39,430h4.81v60h-4.81zM1714.02,430h3.21v60h-3.21zM1718.83,430h3.21v60h-3.21zM1725.25,430h4.81v60h-4.81zM1731.67,430h1.60v60h-1.60zM1736.49,430h4.81v60h-4.81zM1742.90,430h6.42v60h-6.42zM1750.93,430h1.60v60h-1.60zM1754.14,430h3.21v60h-3.21zM1762.16,430h4.81v60h-4.81zM1768.58,430h1.60v60h-1.60zM1771.79,430h3.21v60h-3.21z" fill="#000"/></svg>
<span class="t" style="left:26.80px;top:3.80px;font-size:17.8px;color:#ffffff;font-weight:700;-webkit-text-stroke:0.45px #ffffff;transform:scaleX(1.0697);transform-origin:0 0;">ShipSure</span>
<div style="left:160px;top:0;width:73.19999999999999px;height:1002px;overflow:hidden"><span class="t" style="left:6.70px;top:7.10px;font-size:12px;color:#ffffff;-webkit-text-stroke:0.4px #ffffff;transform:scaleX(0.8905);transform-origin:0 0;">Fleet Manager</span></div>
<span class="t" style="left:286.50px;top:7.00px;font-size:12px;color:#ffffff;-webkit-text-stroke:0.4px #ffffff;transform:scaleX(0.8879);transform-origin:0 0;">Procurement</span>
<span class="t" style="left:406.00px;top:6.50px;font-size:13px;color:#ffffff;-webkit-text-stroke:0.4px #ffffff;transform:scaleX(0.9003);transform-origin:0 0;">Procurement</span>
<span class="t" style="left:1391.60px;top:7.30px;font-size:13px;color:#8a8a8a;font-style:italic;transform:scaleX(0.9018);transform-origin:0 0;">Type here to search</span>
<span class="t" style="left:1553.75px;top:8.30px;font-size:12px;color:#ffffff;-webkit-text-stroke:0.4px #ffffff;transform:scaleX(0.9365);transform-origin:0 0;">V.Way</span>
<span class="t" style="left:1601.00px;top:8.30px;font-size:12px;color:#ffffff;-webkit-text-stroke:0.4px #ffffff;transform:scaleX(0.9379);transform-origin:0 0;">VMS</span>
<span class="t" style="left:17.00px;top:62.50px;font-size:11.8px;color:#ffffff;-webkit-text-stroke:0.45px #ffffff;">Add</span>
<span class="t" style="left:90.00px;top:62.50px;font-size:11.8px;color:#ffffff;-webkit-text-stroke:0.45px #ffffff;transform:scaleX(0.9093);transform-origin:0 0;">Search</span>
<span class="t" style="left:159.00px;top:62.50px;font-size:11.8px;color:#ffffff;-webkit-text-stroke:0.45px #ffffff;transform:scaleX(1.0113);transform-origin:0 0;">Comparator</span>
<span class="t" style="left:257.50px;top:62.50px;font-size:11.8px;color:#ffffff;-webkit-text-stroke:0.45px #ffffff;transform:scaleX(0.8406);transform-origin:0 0;">REQ</span>
<span class="t" style="left:297.50px;top:62.50px;font-size:11.8px;color:#ffffff;-webkit-text-stroke:0.45px #ffffff;transform:scaleX(0.9188);transform-origin:0 0;">ENQ</span>
<span class="t" style="left:338.00px;top:62.50px;font-size:11.8px;color:#ffffff;-webkit-text-stroke:0.45px #ffffff;transform:scaleX(0.9791);transform-origin:0 0;">Auth ENQ</span>
<span class="t" style="left:410.60px;top:62.50px;font-size:11.8px;color:#ffffff;-webkit-text-stroke:0.45px #ffffff;transform:scaleX(0.8799);transform-origin:0 0;">PO</span>
<span class="t" style="left:449.00px;top:62.50px;font-size:11.8px;color:#ffffff;-webkit-text-stroke:0.45px #ffffff;transform:scaleX(0.9152);transform-origin:0 0;">FO</span>
<span class="t" style="left:501.50px;top:62.50px;font-size:11.8px;color:#ffffff;-webkit-text-stroke:0.45px #ffffff;transform:scaleX(0.9258);transform-origin:0 0;">Statuses</span>
<span class="t" style="left:604.00px;top:36.00px;font-size:11.8px;color:#ffffff;-webkit-text-stroke:0.45px #ffffff;transform:scaleX(0.9970);transform-origin:0 0;">Show Urgent</span>
<span class="t" style="left:604.00px;top:61.70px;font-size:11.8px;color:#ffffff;-webkit-text-stroke:0.45px #ffffff;transform:scaleX(0.9579);transform-origin:0 0;">Show Tracked</span>
<span class="t" style="left:720.00px;top:36.00px;font-size:11.8px;color:#ffffff;-webkit-text-stroke:0.45px #ffffff;transform:scaleX(0.9914);transform-origin:0 0;">Show Dry Dock</span>
<span class="t" style="left:720.00px;top:61.70px;font-size:11.8px;color:#ffffff;-webkit-text-stroke:0.45px #ffffff;transform:scaleX(0.9820);transform-origin:0 0;">Show Info Req</span>
<span class="t" style="left:861.00px;top:36.00px;font-size:11.8px;color:#ffffff;-webkit-text-stroke:0.45px #ffffff;transform:scaleX(0.9256);transform-origin:0 0;">Cancel</span>
<span class="t" style="left:861.00px;top:61.70px;font-size:11.8px;color:#ffffff;-webkit-text-stroke:0.45px #ffffff;transform:scaleX(1.0045);transform-origin:0 0;">Convert</span>
<span class="t" style="left:946.00px;top:36.00px;font-size:11.8px;color:#ffffff;-webkit-text-stroke:0.45px #ffffff;transform:scaleX(1.0303);transform-origin:0 0;">Hold</span>
<span class="t" style="left:946.00px;top:61.70px;font-size:11.8px;color:#ffffff;-webkit-text-stroke:0.45px #ffffff;transform:scaleX(0.9819);transform-origin:0 0;">Tracking</span>
<span class="t" style="left:1034.00px;top:36.00px;font-size:11.8px;color:#ffffff;-webkit-text-stroke:0.45px #ffffff;transform:scaleX(1.0072);transform-origin:0 0;">Request Information</span>
<span class="t" style="left:1034.00px;top:61.70px;font-size:11.8px;color:#a2d2ec;-webkit-text-stroke:0.45px #a2d2ec;transform:scaleX(0.9433);transform-origin:0 0;">Close Request</span>
<span class="t" style="left:1202.50px;top:36.00px;font-size:11.8px;color:#ffffff;-webkit-text-stroke:0.45px #ffffff;transform:scaleX(1.0034);transform-origin:0 0;">Merge Order</span>
<span class="t" style="left:1202.50px;top:61.70px;font-size:11.8px;color:#ffffff;-webkit-text-stroke:0.45px #ffffff;transform:scaleX(0.9975);transform-origin:0 0;">Split Order</span>
<span class="t" style="left:1313.00px;top:36.00px;font-size:11.8px;color:#ffffff;-webkit-text-stroke:0.45px #ffffff;transform:scaleX(0.9839);transform-origin:0 0;">Copy Order</span>
<span class="t" style="left:1313.00px;top:61.70px;font-size:11.8px;color:#ffffff;-webkit-text-stroke:0.45px #ffffff;transform:scaleX(1.0115);transform-origin:0 0;">Copy Order Multi.</span>
<span class="t" style="left:1468.50px;top:36.00px;font-size:11.8px;color:#ffffff;-webkit-text-stroke:0.45px #ffffff;transform:scaleX(0.9827);transform-origin:0 0;">Edit Order Details</span>
<span class="t" style="left:1468.50px;top:61.70px;font-size:11.8px;color:#ffffff;-webkit-text-stroke:0.45px #ffffff;transform:scaleX(0.9945);transform-origin:0 0;">Print Order Details</span>
<span class="t" style="left:1626.00px;top:36.00px;font-size:11.8px;color:#ffffff;-webkit-text-stroke:0.45px #ffffff;transform:scaleX(1.0045);transform-origin:0 0;">Convert</span>
<span class="t" style="left:1702.50px;top:62.50px;font-size:11.8px;color:#ffffff;-webkit-text-stroke:0.45px #ffffff;transform:scaleX(0.9682);transform-origin:0 0;">Reports</span>
<span class="t" style="left:15.60px;top:83.00px;font-size:11.8px;color:#9fd1ec;transform:scaleX(0.9592);transform-origin:0 0;">Manage</span>
<span class="t" style="left:139.00px;top:83.00px;font-size:11.8px;color:#9fd1ec;transform:scaleX(0.9093);transform-origin:0 0;">Search</span>
<span class="t" style="left:348.00px;top:83.00px;font-size:11.8px;color:#9fd1ec;transform:scaleX(0.9078);transform-origin:0 0;">Stage</span>
<span class="t" style="left:636.00px;top:83.00px;font-size:11.8px;color:#9fd1ec;transform:scaleX(0.9339);transform-origin:0 0;">Filters</span>
<span class="t" style="left:952.50px;top:83.00px;font-size:11.8px;color:#9fd1ec;transform:scaleX(0.9563);transform-origin:0 0;">Status Actions</span>
<span class="t" style="left:1252.50px;top:83.00px;font-size:11.8px;color:#9fd1ec;transform:scaleX(0.9352);transform-origin:0 0;">Process Actions</span>
<span class="t" style="left:1468.75px;top:83.00px;font-size:11.8px;color:#9fd1ec;transform:scaleX(0.9848);transform-origin:0 0;">Other Actions</span>
<span class="t" style="left:1599.00px;top:83.00px;font-size:11.8px;color:#9fd1ec;transform:scaleX(0.9794);transform-origin:0 0;">Quick Actions</span>
<span class="t" style="left:1714.00px;top:83.00px;font-size:11.8px;color:#9fd1ec;transform:scaleX(0.9457);transform-origin:0 0;">Report</span>
<span class="t" style="left:42.40px;top:112.60px;font-size:8.3px;color:#ffffff;font-weight:700;transform:scaleX(0.9106);transform-origin:0 0;">RE</span>
<span class="t" style="left:67.50px;top:108.40px;font-size:16.3px;color:#111;-webkit-text-stroke:0.15px #111;transform:scaleX(0.9847);transform-origin:0 0;">3788 - 90861</span>
<span class="t" style="left:181.00px;top:108.40px;font-size:16.3px;color:#111;-webkit-text-stroke:0.15px #111;transform:scaleX(0.9737);transform-origin:0 0;">MAIN PROPULSION</span>
<span class="t" style="left:38.75px;top:138.60px;font-size:16.3px;color:#3d9fd6;-webkit-text-stroke:0.4px #3d9fd6;transform:scaleX(0.9016);transform-origin:0 0;">DEMO VESSEL</span>
<span class="t" style="left:162.75px;top:140.90px;font-size:12.1px;color:#8a8a8a;transform:scaleX(0.9296);transform-origin:0 0;">Date Requested</span>
<span class="t" style="left:254.50px;top:140.90px;font-size:12.1px;color:#333;transform:scaleX(1.0156);transform-origin:0 0;">28 Apr 2025</span>
<span class="t" style="left:339.25px;top:140.90px;font-size:12.1px;color:#333;transform:scaleX(0.9458);transform-origin:0 0;">Spares</span>
<span class="t" style="left:394.25px;top:140.90px;font-size:12.1px;color:#8a8a8a;transform:scaleX(0.9541);transform-origin:0 0;">Account Code</span>
<span class="t" style="left:476.50px;top:140.90px;font-size:12.1px;color:#333;transform:scaleX(0.9869);transform-origin:0 0;">5430400 - MAIN PROPULSION</span>
<span class="t" style="left:663.25px;top:140.90px;font-size:12.1px;color:#8a8a8a;transform:scaleX(0.9548);transform-origin:0 0;">Long Term Storage</span>
<span class="t" style="left:771.75px;top:140.90px;font-size:12.1px;color:#333;transform:scaleX(1.0182);transform-origin:0 0;">No</span>
<span class="t" style="left:806.25px;top:140.90px;font-size:12.1px;color:#8a8a8a;transform:scaleX(0.9469);transform-origin:0 0;">Linked Defects</span>
<span class="t" style="left:915.60px;top:135.90px;font-size:10px;color:#3d9fd6;font-weight:700;transform:scaleX(0.8989);transform-origin:0 0;">0</span>
<span class="t" style="left:38.50px;top:172.00px;font-size:12.2px;color:#1c1c1c;-webkit-text-stroke:0.12px #1c1c1c;transform:scaleX(0.9061);transform-origin:0 0;">SUMMARY</span>
<span class="t" style="left:123.50px;top:172.00px;font-size:12.2px;color:#ffffff;-webkit-text-stroke:0.4px #ffffff;transform:scaleX(0.9331);transform-origin:0 0;">ORDER LINES</span>
<span class="t" style="left:229.50px;top:172.00px;font-size:12.2px;color:#1c1c1c;-webkit-text-stroke:0.12px #1c1c1c;transform:scaleX(0.9067);transform-origin:0 0;">MEMOS</span>
<span class="t" style="left:303.50px;top:172.00px;font-size:12.2px;color:#1c1c1c;-webkit-text-stroke:0.12px #1c1c1c;transform:scaleX(0.8898);transform-origin:0 0;">NOTES &amp; ATTACHMENTS</span>
<span class="t" style="left:465.75px;top:172.00px;font-size:12.2px;color:#1c1c1c;-webkit-text-stroke:0.12px #1c1c1c;transform:scaleX(0.8564);transform-origin:0 0;">BUDGET</span>
<span class="t" style="left:541.75px;top:172.00px;font-size:12.2px;color:#1c1c1c;-webkit-text-stroke:0.12px #1c1c1c;transform:scaleX(0.8118);transform-origin:0 0;">LOGS</span>
<span class="t" style="left:53.00px;top:199.75px;font-size:12.2px;color:#1a7db3;-webkit-text-stroke:0.4px #1a7db3;transform:scaleX(0.9867);transform-origin:0 0;">Add</span>
<span class="t" style="left:123.00px;top:199.75px;font-size:12.2px;color:#1a7db3;-webkit-text-stroke:0.4px #1a7db3;transform:scaleX(0.9835);transform-origin:0 0;">View History</span>
<span class="t" style="left:234.00px;top:199.75px;font-size:12.2px;color:#1a7db3;-webkit-text-stroke:0.4px #1a7db3;transform:scaleX(0.9242);transform-origin:0 0;">Search Warehouse</span>
<span class="t" style="left:38.50px;top:239.25px;font-size:14.2px;color:#111;transform:scaleX(0.9800);transform-origin:0 0;">Order Lines (3)</span>
<span class="t" style="left:73.25px;top:285.25px;font-size:10.5px;color:#222;transform:scaleX(0.8980);transform-origin:0 0;">DOCS</span>
<span class="t" style="left:118.25px;top:285.25px;font-size:10.5px;color:#222;transform:scaleX(0.8847);transform-origin:0 0;">NOTES</span>
<span class="t" style="left:168.00px;top:285.25px;font-size:10.5px;color:#222;transform:scaleX(0.9618);transform-origin:0 0;">#</span>
<span class="t" style="left:198.25px;top:285.25px;font-size:10.5px;color:#222;transform:scaleX(0.9524);transform-origin:0 0;">PART NAME</span>
<span class="t" style="left:395.00px;top:285.25px;font-size:10.5px;color:#222;transform:scaleX(0.8748);transform-origin:0 0;">MAKERS REFERENCE</span>
<span class="t" style="left:510.00px;top:285.25px;font-size:10.5px;color:#222;transform:scaleX(0.9149);transform-origin:0 0;">PLATE/SHEET NO.</span>
<span class="t" style="left:640.00px;top:285.25px;font-size:10.5px;color:#222;transform:scaleX(0.9618);transform-origin:0 0;">DRAWING POSITION</span>
<span class="t" style="left:757.00px;top:285.25px;font-size:10.5px;color:#222;transform:scaleX(1.0204);transform-origin:0 0;">UOM</span>
<span class="t" style="left:807.00px;top:285.25px;font-size:10.5px;color:#222;transform:scaleX(0.9296);transform-origin:0 0;">MIN LEVEL</span>
<span class="t" style="left:877.00px;top:285.25px;font-size:10.5px;color:#222;transform:scaleX(0.9005);transform-origin:0 0;">ROB</span>
<span class="t" style="left:915.00px;top:285.25px;font-size:10.5px;color:#222;transform:scaleX(0.8566);transform-origin:0 0;">REQ</span>
<span class="t" style="left:952.50px;top:285.25px;font-size:10.5px;color:#222;transform:scaleX(0.9005);transform-origin:0 0;">ENQ</span>
<span class="t" style="left:1032.50px;top:271.25px;font-size:10.5px;color:#222;transform:scaleX(0.9406);transform-origin:0 0;">PENDING</span>
<span class="t" style="left:1032.50px;top:284.25px;font-size:10.5px;color:#222;transform:scaleX(0.9618);transform-origin:0 0;">QUANTITY</span>
<span class="t" style="left:1107.00px;top:271.25px;font-size:10.5px;color:#222;transform:scaleX(0.9036);transform-origin:0 0;">ORDER LINE</span>
<span class="t" style="left:1107.00px;top:284.25px;font-size:10.5px;color:#222;transform:scaleX(0.9618);transform-origin:0 0;">STATUS</span>
<span class="t" style="left:1187.50px;top:271.25px;font-size:10.5px;color:#222;transform:scaleX(0.9479);transform-origin:0 0;">HAZARDOUS</span>
<span class="t" style="left:1187.50px;top:284.25px;font-size:10.5px;color:#222;transform:scaleX(0.9618);transform-origin:0 0;">MATERIALS</span>
<span class="t" style="left:1287.00px;top:271.50px;font-size:10.5px;color:#222;transform:scaleX(0.8692);transform-origin:0 0;">CERTIFICATE</span>
<span class="t" style="left:1287.00px;top:284.25px;font-size:10.5px;color:#222;transform:scaleX(0.8974);transform-origin:0 0;">REQUIRED</span>
<div style="left:1380px;top:0;width:74px;height:1002px;overflow:hidden"><span class="t" style="left:7.00px;top:285.25px;font-size:10.5px;color:#222;transform:scaleX(0.9618);transform-origin:0 0;">ACCOUNT CODE</span></div>
<span class="t" style="left:88.50px;top:316.75px;font-size:14.2px;color:#111;transform:scaleX(1.0301);transform-origin:0 0;">Main Engine</span>
<span class="t" style="left:88.50px;top:337.00px;font-size:12.1px;color:#777;transform:scaleX(0.9372);transform-origin:0 0;">Maker</span>
<span class="t" style="left:131.00px;top:337.00px;font-size:12.1px;color:#222;">STX MAN B&amp;W</span>
<span class="t" style="left:88.50px;top:354.75px;font-size:12.1px;color:#777;transform:scaleX(0.9618);transform-origin:0 0;">Type</span>
<span class="t" style="left:131.00px;top:354.75px;font-size:12.1px;color:#222;transform:scaleX(0.9889);transform-origin:0 0;">6S60MC-C (Mark 7)</span>
<span class="t" style="left:88.50px;top:372.00px;font-size:12.1px;color:#777;transform:scaleX(0.9618);transform-origin:0 0;">Serial</span>
<span class="t" style="left:131.00px;top:372.00px;font-size:12.1px;color:#222;transform:scaleX(0.9560);transform-origin:0 0;">SB6S60-3957</span>
<span class="t" style="left:88.50px;top:389.00px;font-size:12.1px;color:#777;transform:scaleX(0.9547);transform-origin:0 0;">Warranty End Date</span>
<span class="t" style="left:313.00px;top:354.75px;font-size:12.1px;color:#777;transform:scaleX(0.9555);transform-origin:0 0;">Designer</span>
<span class="t" style="left:369.25px;top:354.75px;font-size:12.1px;color:#222;transform:scaleX(1.0511);transform-origin:0 0;">MAN B&amp;W</span>
<span class="t" style="left:313.00px;top:372.00px;font-size:12.1px;color:#777;transform:scaleX(0.9748);transform-origin:0 0;">Critical Component</span>
<span class="t" style="left:424.25px;top:372.00px;font-size:12.1px;color:#222;transform:scaleX(1.0182);transform-origin:0 0;">No</span>
<span class="t" style="left:313.00px;top:389.00px;font-size:12.1px;color:#777;transform:scaleX(0.9705);transform-origin:0 0;">Equipment Category</span>
<span class="t" style="left:431.00px;top:389.00px;font-size:12.1px;color:#222;transform:scaleX(0.9618);transform-origin:0 0;">Pumps</span>
<span class="t" style="left:174.52px;top:420.90px;font-size:12.1px;color:#222;transform:scaleX(0.9618);transform-origin:0 0;">1</span>
<span class="t" style="left:198.50px;top:420.90px;font-size:12.1px;color:#222;transform:scaleX(1.0084);transform-origin:0 0;">3-way valve for PI 21-22</span>
<span class="t" style="left:395.20px;top:420.90px;font-size:12.1px;color:#222;transform:scaleX(1.0207);transform-origin:0 0;">50905-04H-238</span>
<span class="t" style="left:510.00px;top:420.90px;font-size:12.1px;color:#222;transform:scaleX(1.0151);transform-origin:0 0;">50905-04H</span>
<span class="t" style="left:640.00px;top:420.90px;font-size:12.1px;color:#222;transform:scaleX(0.9907);transform-origin:0 0;">238</span>
<span class="t" style="left:757.00px;top:420.90px;font-size:12.1px;color:#222;transform:scaleX(0.9560);transform-origin:0 0;">pcs</span>
<span class="t" style="left:854.27px;top:420.90px;font-size:12.1px;color:#222;transform:scaleX(0.9618);transform-origin:0 0;">0</span>
<span class="t" style="left:892.27px;top:420.90px;font-size:12.1px;color:#222;transform:scaleX(0.9618);transform-origin:0 0;">0</span>
<span class="t" style="left:922.56px;top:420.90px;font-size:12.1px;color:#222;transform:scaleX(0.9618);transform-origin:0 0;">10</span>
<span class="t" style="left:1003.31px;top:420.90px;font-size:12.1px;color:#222;transform:scaleX(0.9618);transform-origin:0 0;">10</span>
<span class="t" style="left:1387.00px;top:420.90px;font-size:12.1px;color:#222;">5430400</span>
<span class="t" style="left:174.52px;top:457.60px;font-size:12.1px;color:#222;transform:scaleX(0.9618);transform-origin:0 0;">2</span>
<span class="t" style="left:198.50px;top:457.60px;font-size:12.1px;color:#222;transform:scaleX(1.0212);transform-origin:0 0;">Adjusting screw</span>
<span class="t" style="left:395.20px;top:457.60px;font-size:12.1px;color:#222;transform:scaleX(1.0207);transform-origin:0 0;">50903-01H-154</span>
<span class="t" style="left:510.00px;top:457.60px;font-size:12.1px;color:#222;transform:scaleX(1.0151);transform-origin:0 0;">50903-01H</span>
<span class="t" style="left:640.00px;top:457.60px;font-size:12.1px;color:#222;transform:scaleX(0.9907);transform-origin:0 0;">154</span>
<span class="t" style="left:757.00px;top:457.60px;font-size:12.1px;color:#222;transform:scaleX(0.9560);transform-origin:0 0;">pcs</span>
<span class="t" style="left:854.27px;top:457.60px;font-size:12.1px;color:#222;transform:scaleX(0.9618);transform-origin:0 0;">0</span>
<span class="t" style="left:892.27px;top:457.60px;font-size:12.1px;color:#222;transform:scaleX(0.9618);transform-origin:0 0;">0</span>
<span class="t" style="left:929.02px;top:457.60px;font-size:12.1px;color:#222;transform:scaleX(0.9618);transform-origin:0 0;">1</span>
<span class="t" style="left:1009.77px;top:457.60px;font-size:12.1px;color:#222;transform:scaleX(0.9618);transform-origin:0 0;">1</span>
<span class="t" style="left:1387.00px;top:457.60px;font-size:12.1px;color:#222;">5430400</span>
<span class="t" style="left:174.52px;top:494.60px;font-size:12.1px;color:#222;transform:scaleX(0.9618);transform-origin:0 0;">3</span>
<span class="t" style="left:198.50px;top:494.60px;font-size:12.1px;color:#222;">Ball bearing</span>
<span class="t" style="left:395.20px;top:494.60px;font-size:12.1px;color:#222;transform:scaleX(1.0207);transform-origin:0 0;">51501-03H-126</span>
<span class="t" style="left:510.00px;top:494.60px;font-size:12.1px;color:#222;transform:scaleX(1.0151);transform-origin:0 0;">51501-03H</span>
<span class="t" style="left:640.00px;top:494.60px;font-size:12.1px;color:#222;transform:scaleX(0.9907);transform-origin:0 0;">126</span>
<span class="t" style="left:757.00px;top:494.60px;font-size:12.1px;color:#222;transform:scaleX(0.9560);transform-origin:0 0;">pcs</span>
<span class="t" style="left:854.27px;top:494.60px;font-size:12.1px;color:#222;transform:scaleX(0.9618);transform-origin:0 0;">0</span>
<span class="t" style="left:892.27px;top:494.60px;font-size:12.1px;color:#222;transform:scaleX(0.9618);transform-origin:0 0;">0</span>
<span class="t" style="left:929.02px;top:494.60px;font-size:12.1px;color:#222;transform:scaleX(0.9618);transform-origin:0 0;">1</span>
<span class="t" style="left:1009.77px;top:494.60px;font-size:12.1px;color:#222;transform:scaleX(0.9618);transform-origin:0 0;">1</span>
<span class="t" style="left:1387.00px;top:494.60px;font-size:12.1px;color:#222;">5430400</span>
<span class="t" style="left:1491.00px;top:210.00px;font-size:14.2px;color:#111;transform:scaleX(1.0228);transform-origin:0 0;">Part Details</span>
<span class="t" style="left:1491.00px;top:237.00px;font-size:12.1px;color:#111;-webkit-text-stroke:0.4px #111;transform:scaleX(1.0333);transform-origin:0 0;">3-way valve for PI 21-22</span>
<span class="t" style="left:1491.00px;top:264.25px;font-size:12.1px;color:#777;transform:scaleX(0.9311);transform-origin:0 0;">Makers Reference</span>
<span class="t" style="left:1491.00px;top:286.00px;font-size:12.1px;color:#777;transform:scaleX(0.9618);transform-origin:0 0;">Maker</span>
<span class="t" style="left:1491.00px;top:308.00px;font-size:12.1px;color:#777;transform:scaleX(0.9618);transform-origin:0 0;">Serial</span>
<span class="t" style="left:1491.00px;top:329.00px;font-size:12.1px;color:#777;transform:scaleX(0.9618);transform-origin:0 0;">Type</span>
<span class="t" style="left:1491.00px;top:350.00px;font-size:12.1px;color:#777;transform:scaleX(0.9618);transform-origin:0 0;">Designer</span>
<span class="t" style="left:1491.00px;top:371.00px;font-size:12.1px;color:#777;transform:scaleX(0.9614);transform-origin:0 0;">EAN Number</span>
<span class="t" style="left:1594.50px;top:264.25px;font-size:12.1px;color:#222;transform:scaleX(1.0171);transform-origin:0 0;">50905-04H-238</span>
<span class="t" style="left:1594.50px;top:286.00px;font-size:12.1px;color:#222;transform:scaleX(0.9950);transform-origin:0 0;">STX MAN B&amp;W</span>
<span class="t" style="left:1594.50px;top:308.00px;font-size:12.1px;color:#222;transform:scaleX(0.9494);transform-origin:0 0;">SB6S60-3957</span>
<span class="t" style="left:1594.50px;top:329.00px;font-size:12.1px;color:#222;transform:scaleX(0.9912);transform-origin:0 0;">6S60MC-C (Mark 7)</span>
<span class="t" style="left:1594.50px;top:350.00px;font-size:12.1px;color:#222;transform:scaleX(1.0468);transform-origin:0 0;">MAN B&amp;W</span>
<span class="t" style="left:1491.00px;top:395.00px;font-size:12.1px;color:#777;transform:scaleX(0.9920);transform-origin:0 0;">Maximum</span>
<span class="t" style="left:1557.00px;top:395.00px;font-size:12.1px;color:#777;transform:scaleX(0.9369);transform-origin:0 0;">Average</span>
<span class="t" style="left:1614.00px;top:395.00px;font-size:12.1px;color:#777;transform:scaleX(1.0140);transform-origin:0 0;">Minimum</span>
<span class="t" style="left:1678.00px;top:395.00px;font-size:12.1px;color:#777;transform:scaleX(0.9376);transform-origin:0 0;">Currency</span>
<span class="t" style="left:1491.00px;top:412.50px;font-size:12.1px;color:#222;transform:scaleX(0.9662);transform-origin:0 0;">0.00</span>
<span class="t" style="left:1557.00px;top:412.50px;font-size:12.1px;color:#222;transform:scaleX(0.9555);transform-origin:0 0;">0.00</span>
<span class="t" style="left:1614.00px;top:412.50px;font-size:12.1px;color:#222;transform:scaleX(0.9662);transform-origin:0 0;">0.00</span>
<span class="t" style="left:1572.50px;top:494.00px;font-size:14.4px;color:#111;transform:scaleX(0.9340);transform-origin:0 0;">SPKUATS0970462260</span>
<span class="t" style="left:1491.00px;top:538.00px;font-size:14.2px;color:#111;transform:scaleX(1.0104);transform-origin:0 0;">Usage Details (0)</span>
<span class="t" style="left:1655.75px;top:568.00px;font-size:12.1px;color:#111;transform:scaleX(0.9646);transform-origin:0 0;">No Items Found</span>
<span class="t" style="left:1491.00px;top:612.00px;font-size:14.2px;color:#111;transform:scaleX(1.0313);transform-origin:0 0;">Planned Maintenance (0)</span>
<span class="t" style="left:1500.00px;top:649.00px;font-size:10.5px;color:#222;transform:scaleX(0.9639);transform-origin:0 0;">JOB NAME</span>
<span class="t" style="left:1600.00px;top:649.00px;font-size:10.5px;color:#222;transform:scaleX(0.9186);transform-origin:0 0;">JOB DUE DATE</span>
<span class="t" style="left:1690.75px;top:649.00px;font-size:10.5px;color:#222;transform:scaleX(0.9606);transform-origin:0 0;">QUANTITY</span>
<span class="t" style="left:1655.75px;top:672.00px;font-size:12.1px;color:#111;transform:scaleX(0.9887);transform-origin:0 0;">No items found.</span>
<span class="t" style="left:1322.00px;top:975.00px;font-size:12.1px;color:#eef5f9;-webkit-text-stroke:0.4px #eef5f9;transform:scaleX(0.8703);transform-origin:0 0;">Save</span>
<span class="t" style="left:1405.00px;top:975.00px;font-size:12.1px;color:#eef5f9;-webkit-text-stroke:0.4px #eef5f9;transform:scaleX(0.8963);transform-origin:0 0;">Cancel</span>
<svg style="left:0;top:0" width="1919" height="1002" viewBox="0 0 1919 1002"><defs><filter id="cs" x="-20%" y="-20%" width="140%" height="160%"><feGaussianBlur in="SourceAlpha" stdDeviation="1.9"/><feOffset dx="1.2" dy="3.4"/><feComponentTransfer><feFuncA type="linear" slope=".66"/></feComponentTransfer><feMerge><feMergeNode/><feMergeNode in="SourceGraphic"/></feMerge></filter></defs><path d="M141,228.1 L253.2,228.1 A7,7 0 0 1 260.2,235.1 L260.2,262.4 A7,7 0 0 1 253.2,269.4 L140.1,269.4 A7,7 0 0 1 133.1,262.4 L133.1,238.5 L75,218.3 Z" fill="#fff" stroke="#98aaeb" stroke-width="1.9" stroke-linejoin="round" filter="url(#cs)"/><path d="M1491,144 L1660,144 A7,7 0 0 1 1667,151 L1667,180 A7,7 0 0 1 1660,187 L1492,187 L1451,189.6 L1484,179.5 L1484,151 A7,7 0 0 1 1491,144 Z" fill="#fff" stroke="#98aaeb" stroke-width="1.9" stroke-linejoin="round" filter="url(#cs)"/><path d="M453,360 L595.5,360 A7,7 0 0 1 602.5,367 L602.5,393.5 A7,7 0 0 1 595.5,400.5 L463,400.5 L380,413.6 L446,390.5 L446,367 A7,7 0 0 1 453,360 Z" fill="#fff" stroke="#98aaeb" stroke-width="1.9" stroke-linejoin="round" filter="url(#cs)"/><path d="M1036,279.4 L1230.3,279.4 A7,7 0 0 1 1237.3,286.4 L1237.3,335 A7,7 0 0 1 1230.3,342 L1112,342 L982,422 L1076,342 L1036,342 A7,7 0 0 1 1029,335 L1029,286.4 A7,7 0 0 1 1036,279.4 Z" fill="#fff" stroke="#98aaeb" stroke-width="1.9" stroke-linejoin="round" filter="url(#cs)"/><path d="M112.2,528.6 L292.4,528.6 L349.6,518 L300.9,539.4 L298.6,592.2 A7,7 0 0 1 291.6,599.2 L112.2,599.2 A7,7 0 0 1 105.2,592.2 L105.2,535.6 A7,7 0 0 1 112.2,528.6 Z" fill="#fff" stroke="#98aaeb" stroke-width="1.9" stroke-linejoin="round" filter="url(#cs)"/></svg>
<span class="t" style="left:146.20px;top:231.40px;font-size:16px;color:#111;transform:scaleX(0.9823);transform-origin:0 0;">Click to add to</span>
<span class="t" style="left:146.95px;top:249.50px;font-size:16px;color:#111;transform:scaleX(0.9616);transform-origin:0 0;">the order lines</span>
<span class="t" style="left:1519.50px;top:149.00px;font-size:16px;color:#111;transform:scaleX(0.9760);transform-origin:0 0;">Show/Hide Part</span>
<span class="t" style="left:1549.50px;top:167.00px;font-size:16px;color:#111;transform:scaleX(0.9917);transform-origin:0 0;">Details</span>
<span class="t" style="left:475.10px;top:364.20px;font-size:16px;color:#111;transform:scaleX(0.9704);transform-origin:0 0;">Select to view</span>
<span class="t" style="left:463.40px;top:382.00px;font-size:16px;color:#111;transform:scaleX(0.9842);transform-origin:0 0;">spare part details</span>
<span class="t" style="left:1042.80px;top:293.60px;font-size:16px;color:#111;transform:scaleX(0.9535);transform-origin:0 0;">Enter the quantity required</span>
<span class="t" style="left:1086.50px;top:311.60px;font-size:16px;color:#111;transform:scaleX(0.9445);transform-origin:0 0;">in this column</span>
<span class="t" style="left:127.10px;top:537.80px;font-size:16px;color:#111;transform:scaleX(0.9794);transform-origin:0 0;">This tag indicates it is</span>
<span class="t" style="left:132.25px;top:555.40px;font-size:16px;color:#111;transform:scaleX(0.9818);transform-origin:0 0;">mapped to a Market</span>
<span class="t" style="left:153.35px;top:573.40px;font-size:16px;color:#111;transform:scaleX(0.9788);transform-origin:0 0;">Place Product</span>
</body></html>
